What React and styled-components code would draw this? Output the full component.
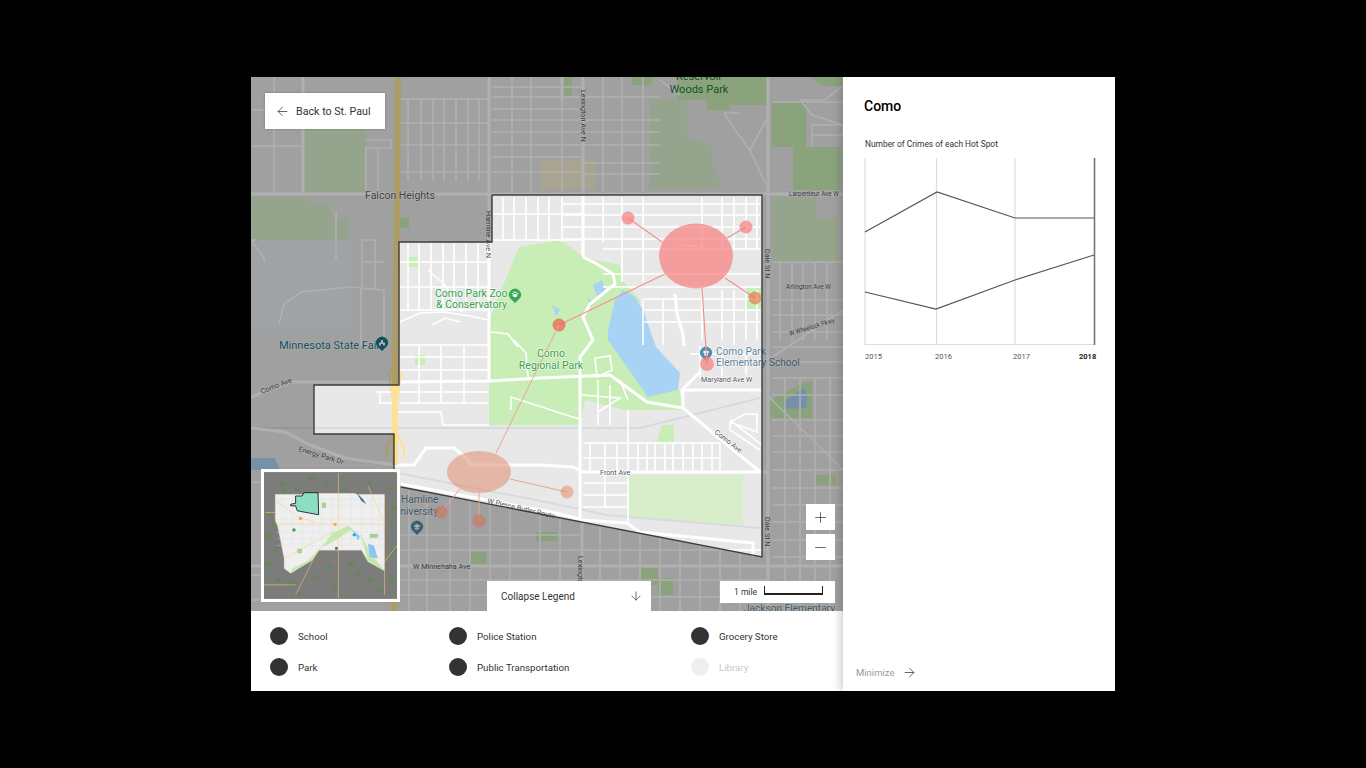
import styled, { createGlobalStyle } from "styled-components";
import { ArrowLeft, ArrowDown, ArrowRight, Plus, Minus } from "lucide-react";

const GlobalStyle = createGlobalStyle`
	html, body {
		margin: 0;
		height: 100%;
		background: #000000;
		font-family: Roboto, "Liberation Sans", sans-serif;
	}
`;

// map coordinates are page pixels, so the viewBox starts at the stage corner
const hLines = (x1, x2, ys) => ys.map((y) => `M${x1} ${y}H${x2}`).join("");
const vLines = (y1, y2, xs) => xs.map((x) => `M${x} ${y1}V${y2}`).join("");
const edgeY = (x) => 487 + (x - 401) * 0.194;
const southVerticals = (xs) =>
	xs.map((x) => `M${x} ${edgeY(x) + 1}V611`).join("");

const thinRoads = [
	// north west of the district
	vLines(100, 180, [408, 421, 433, 444, 456, 468, 479]),
	hLines(399, 489, [99, 123, 145, 172]),
	hLines(492, 582, [87, 97, 109, 120, 132, 145, 157, 172]),
	vLines(77, 192, [512, 531, 562, 603]),
	vLines(77, 192, [274]),
	hLines(251, 302, [110, 146]),
	vLines(77, 192, [622, 643]),
	hLines(582, 660, [97, 120, 132, 145, 163, 174]),
	"M366 140H391L391 148H366V192M378 150V192",
	"M251 240H256M251 240L264 258V262",
	"M279 324L284 304L301 292L351 287L384 290",
	"M362 240H375V290M362 240V290M362 262H384M336 212V260",
	"M340 345H384M361 287V345M384 290V345",
	"M660 80L680 95M724 113L735 130L750 150L766 185M750 150L766 120M724 113L740 113",
	"M800 100L825 100L843 85M800 100L812 115L843 125M812 125H843V135H812ZM812 135V147",
	// north east and east
	hLines(772, 843, [102, 262, 300, 315, 332, 347, 362, 378, 395, 420, 436, 452, 470, 488, 505, 522, 540, 557]),
	vLines(262, 340, [780, 792, 803, 815, 827]),
	vLines(378, 611, [785, 800, 815, 830]),
	"M768 396L843 470",
	"M768 360L843 310",
	// inside, north part
	vLines(197, 250, [622, 643, 702, 722, 734, 746, 757]),
	vLines(197, 242, [562, 603]),
	hLines(562, 760, [204, 215, 227, 239]),
	hLines(603, 760, [249, 274, 287]),
	vLines(245, 282, [622, 643]),
	vLines(197, 240, [503, 514, 526, 538, 549]),
	hLines(492, 582, [214, 240]),
	vLines(290, 340, [702, 722, 734, 746, 757]),
	hLines(643, 760, [299, 310, 322]),
	vLines(300, 345, [643, 663]),
	"M682 246H702M680 240V246",
	// inside, west part
	vLines(243, 310, [408, 419, 431, 443, 454, 466, 478]),
	hLines(400, 489, [262, 287, 310, 345, 357, 370, 392, 403]),
	vLines(345, 403, [419, 441, 464]),
	"M400 322L420 313L445 312L470 316L489 320M432 325L445 318L460 322",
	"M428 270L445 285L462 312",
	"M491 332L508 334L518 347M514 340L526 353L528 377",
	"M376 392H398M380 392V403H398",
	"M398 412H441L443 425H489",
	"M511 410V397L551 410L582 420",
	"M582 395L620 398L598 412M595 358L610 356L612 370L597 377Z",
	"M598 380V425M620 380L628 400M610 385V425",
	"M690 354H762M700 346V378M722 346V378M734 310V345M746 346V375",
	// inside, south part
	vLines(443, 472, [590, 605, 617, 638, 647, 655, 665, 673, 683, 693, 702, 712, 720]),
	hLines(583, 720, [443, 458]),
	"M628 410V522",
	hLines(583, 628, [483, 495, 507]),
	"M605 472V507",
	"M730 422L745 414H757V432L730 422M730 422V430L760 450M730 420L762 445",
	// south of the district
	southVerticals([409, 427, 450, 470, 490, 510, 540, 560, 600, 620, 640, 660, 680, 700, 720, 740]),
	hLines(401, 582, [535, 550, 580, 595]),
	hLines(582, 768, [550, 580, 597]),
	"M251 482H262M251 575H262M251 600H262",
];

const mainRoads = [
	"M251 194H843",
	"M489 77V381",
	"M303 77V192",
	"M583 77V257",
	"M562 77V100",
	"M768 77V611",
	"M251 397L291 382H395L489 381L540 378L610 375L647 402L683 408L760 472",
	"M251 428L285 432L310 445L345 458L395 465H414L426 448H454L468 460L471 465H540L573 467L583 472H768",
	"M583 257L597 264L613 274L615 284L590 304L583 317L593 340L580 357V520",
	"M683 408L682 390L700 372M675 294L677 314L683 334L684 346",
	"M683 408V390H762",
	"M401 484L551 512L583 520L627 523L640 532L753 543V557",
	"M582 520V611",
	"M251 566H843",
];

const PARKS = [
	"M519 247L560 240L585 258L620 265L622 280L640 300L640 325L660 390L680 390L683 410L625 410L585 400L580 425H489V320Z",
	"M662 425H674V442H657Z",
	"M746 288H762V309H746Z",
	"M677 77H767V105H730V110H707V100H677Z",
	"M772 102H806V147H841V190H793V147H772Z",
	"M770 400L805 382H812V418H770Z",
	"M640 568H658V578H673V595H658V585H640Z",
	"M536 532H557V541H536Z",
	"M471 552H486V564H471Z",
	"M815 475H836V485H815Z",
	"M400 218H409V228H400Z",
	"M408 257H418V267H408Z",
	"M415 355H425V365H415Z",
	"M810 77H843V86H822Z",
	"M564 77H572V96H564Z",
	"M632 77H652V85H632Z",
];

// these read much paler than the parks in the reference
const PALE_PARKS = [
	"M650 99L687 100V137L713 147L712 164L722 189H650Z",
	"M772 197H816V218H838V262H772Z",
	"M305 129H366V192H305Z",
	"M251 197H309V204H331V218H349V240H251Z",
	"M629 475H743V525L629 519Z",
];

const OUTSIDE =
	"M251 77H843V611H251ZM492 195H762V557L401 487L394 470V434H314V385H399V242H492Z";

const Pin = ({ x, y, color, children }) => (
	<g transform={`translate(${x} ${y})`}>
		<path d="M0 8L-5 3A6 6 0 1 1 5 3Z" fill={color} />
		<g fill="#ffffff">{children}</g>
	</g>
);

const Paw = () => (
	<>
		<ellipse cy="0.5" rx="2.2" ry="1.7" />
		<circle cx="-2.6" cy="-1.4" r="0.8" />
		<circle cx="-0.9" cy="-2.7" r="0.8" />
		<circle cx="0.9" cy="-2.7" r="0.8" />
		<circle cx="2.6" cy="-1.4" r="0.8" />
	</>
);

const SchoolCap = () => <path d="M-3.5 -1L0 -3L3.5 -1L0 1ZM-2 0.400L0 1.500L2 0.400V2L0 3L-2 2Z" />;

const FairTent = () => <path d="M-3 2.500V-0.500H-1V-3H1V-0.500H3V2.500H1V1H-1V2.500Z" />;

const MapDrawing = () => (
	<MapSvg viewBox="251 77 592 534">
		<rect x="251" y="77" width="592" height="534" fill="#e8e8e8" />
		<rect x="251" y="230" width="100" height="100" fill="#e6edef" />
		<path d="M540 160H595V189H540Z" fill="#f5ecd2" />
		<path d="M251 458H275L280 470H251Z" fill="#a9d3f5" />
		<path d={PARKS.join("")} fill="#c9edb6" />
		<path d={PALE_PARKS.join("")} fill="#d8eecb" />
		<path
			d="M608 330L615 300L623 290L635 297L643 310L656 347L680 373L678 390L648 397L620 357L608 340Z"
			fill="#a9d3f5"
		/>
		<path d="M783 403L803 388L808 395L806 408L785 409Z" fill="#a9d3f5" />
		<path d="M593 285L602 280L606 292L597 296ZM588 298L594 303L590 308ZM552 305L560 310L556 316Z" fill="#a9d3f5" />
		<path d="M251 428H640L760 398" stroke="#d8dade" strokeWidth="2" fill="none" />
		<path d="M398 473L551 503L607 515L760 528" stroke="#d8dade" strokeWidth="2" fill="none" />
		<path d={thinRoads.join("")} stroke="#ffffff" strokeWidth="1.6" fill="none" />
		<path d={mainRoads.join("")} stroke="#ffffff" strokeWidth="3" fill="none" />
		<path
			d="M398 77L397 200L396 300L395 360L395 465M394 600V611"
			stroke="#fde293"
			strokeWidth="6"
			fill="none"
		/>
		<path
			d="M395 360L389 375L393 400M395 360L401 375L397 400M395 430L386 448L388 458M395 430L404 448L404 458"
			stroke="#fde293"
			strokeWidth="2"
			fill="none"
		/>
		<MapLabels>
			<DarkLabel x="400" y="199" textAnchor="middle">Falcon Heights</DarkLabel>
			<GreenLabel x="699" y="80" textAnchor="middle">Reservoir</GreenLabel>
			<GreenLabel x="699" y="93" textAnchor="middle">Woods Park</GreenLabel>
			<RoadLabel transform="translate(581 90) rotate(90)">Lexington Ave N</RoadLabel>
			<RoadLabel transform="translate(486 211) rotate(90)">Hamline Ave N</RoadLabel>
			<RoadLabel x="789" y="196" textLength="50" lengthAdjust="spacingAndGlyphs">Larpenteur Ave W</RoadLabel>
			<RoadLabel transform="translate(765 249) rotate(90)">Dale St N</RoadLabel>
			<RoadLabel transform="translate(765 517) rotate(90)">Dale St N</RoadLabel>
			<RoadLabel x="786" y="289" textLength="45" lengthAdjust="spacingAndGlyphs">Arlington Ave W</RoadLabel>
			<RoadLabel transform="translate(790 336) rotate(-17)" textLength="47" lengthAdjust="spacingAndGlyphs">W Wheelock Pkwy</RoadLabel>
			<ParkLabel x="435" y="297">Como Park Zoo</ParkLabel>
			<ParkLabel x="436" y="308">&amp; Conservatory</ParkLabel>
			<Pin x={515} y={295} color="#34a853"><Paw /></Pin>
			<TealLabel x="279" y="349">Minnesota State Fair</TealLabel>
			<Pin x={382} y={343} color="#12788c"><FairTent /></Pin>
			<ParkLabel x="551" y="357" textAnchor="middle">Como</ParkLabel>
			<ParkLabel x="551" y="369" textAnchor="middle">Regional Park</ParkLabel>
			<SchoolLabel x="716" y="355">Como Park</SchoolLabel>
			<SchoolLabel x="716" y="366">Elementary School</SchoolLabel>
			<Pin x={706} y={353} color="#4f8fa8"><SchoolCap /></Pin>
			<RoadLabel x="701" y="382">Maryland Ave W</RoadLabel>
			<RoadLabel transform="translate(714 433) rotate(38)">Como Ave</RoadLabel>
			<RoadLabel transform="translate(262 394) rotate(-22)">Como Ave</RoadLabel>
			<RoadLabel transform="translate(298 451) rotate(17)">Energy Park Dr</RoadLabel>
			<RoadLabel transform="translate(487 503) rotate(13)">W Pierce Butler Route</RoadLabel>
			<SchoolLabel x="401" y="503">Hamline</SchoolLabel>
			<SchoolLabel x="394" y="515">University</SchoolLabel>
			<Pin x={417} y={527} color="#4f8fa8"><SchoolCap /></Pin>
			<RoadLabel x="413" y="569">W Minnehaha Ave</RoadLabel>
			<RoadLabel x="600" y="475">Front Ave</RoadLabel>
			<RoadLabel transform="translate(578 556) rotate(90)">Lexington</RoadLabel>
			<SchoolLabel x="744" y="612">Jackson Elementary</SchoolLabel>
		</MapLabels>
		<path d={OUTSIDE} fillRule="evenodd" fill="rgba(0, 0, 0, 0.31)" />
		<path
			d="M492 195H762V557L401 487M394 470V434H314V385H399V242H492V195"
			fill="none"
			stroke="#3c3c3c"
			strokeWidth="1.4"
		/>
		<path
			d="M628 218L662 242M746 227L727 238M755 298L725 278M707 364L702 288M559 325L665 274"
			stroke="#f58f8f"
			strokeWidth="1.2"
			fill="none"
		/>
		<g fill="#f67f7f" fillOpacity="0.72">
			<ellipse cx="696" cy="256" rx="37" ry="32.5" />
			<circle cx="628" cy="218" r="6.5" />
			<circle cx="746" cy="227" r="6.5" />
			<circle cx="755" cy="298" r="6.5" fill="#e27d55" />
			<circle cx="559" cy="325" r="6.5" fill="#ee5e4e" />
			<circle cx="707" cy="364" r="7" />
		</g>
		<path
			d="M559 325L496 453M567 492L510 479M441 512L460 489M479 521V493"
			stroke="#e8a595"
			strokeWidth="1"
			fill="none"
		/>
		<g fill="#e08c70" fillOpacity="0.55">
			<ellipse cx="479" cy="472" rx="32" ry="21" />
			<circle cx="567" cy="492" r="6.5" />
			<circle cx="441" cy="512" r="6.5" fill="#d6705a" />
			<circle cx="479" cy="521" r="6.5" fill="#d6705a" />
		</g>
	</MapSvg>
);

const MINI_SPOTS = [
	[70, 55], [115, 75], [160, 40], [205, 60], [260, 75], [330, 55], [400, 70],
	[60, 120], [32, 150], [45, 180], [30, 215], [50, 260], [30, 300], [60, 350],
	[410, 130], [405, 190], [410, 260], [300, 330], [170, 340], [230, 370],
	[120, 390], [370, 380], [210, 310], [280, 300], [340, 350], [405, 345], [100, 360],
];

const MINI_GRID_X = [80, 110, 140, 170, 200, 230, 260, 290, 320, 350, 375];
const MINI_GRID_Y = [110, 130, 170, 190, 210, 230, 250];

const MiniMapDrawing = () => (
	<MiniSvg viewBox="24 28 404 384">
		<rect x="24" y="28" width="404" height="384" fill="#7c7d7a" />
		<g fill="#68855f">
			{MINI_SPOTS.map(([x, y]) => (
				<rect key={`${x}-${y}`} x={x} y={y} width="18" height="12" />
			))}
		</g>
		<path
			d="M58 95H190V92H300L305 95H390V327L340 300L320 265H190L170 295L105 335L85 320V290L65 190L58 175Z"
			fill="#efefef"
			stroke="#d9b8b0"
		/>
		<path
			d={vLines(95, 262, MINI_GRID_X) + hLines(62, 388, MINI_GRID_Y)}
			stroke="#dcdcdc"
			strokeWidth="1"
			fill="none"
		/>
		<path d="M105 335L170 295L230 215L280 190L320 225L340 300L390 327L345 270L320 220L285 205L240 235L190 262L160 295L110 320Z" fill="#c3e9af" />
		<path d="M340 245L358 250L370 290L345 285ZM295 205L315 222L310 235Z" fill="#8fc6ef" />
		<path d="M305 90L325 110L335 125L320 115Z" fill="#4a6f8f" />
		<g stroke="#f3d27a" strokeWidth="1.6" fill="none">
			<path d="M28 150H60M60 185H390M250 30V410M85 290L240 205M120 400L180 280M390 100V400M24 370H120" />
			<path d="M60 115L130 165L180 180M340 70L390 180M390 300L428 250" />
		</g>
		<g fill="#a5cf94">
			<rect x="125" y="260" width="14" height="14" />
			<rect x="200" y="120" width="12" height="16" />
			<rect x="345" y="215" width="25" height="12" />
		</g>
		<path
			d="M120 100H140L145 90H188L190 157L125 145L120 130L105 130V125L120 122Z"
			fill="#8adfc1"
			stroke="#111111"
			strokeWidth="2.5"
		/>
		<circle cx="135" cy="168" r="5" fill="#f2a93b" />
		<circle cx="115" cy="203" r="5" fill="#2f9e44" />
		<circle cx="88" cy="83" r="5" fill="#2f9e44" />
		<circle cx="298" cy="218" r="5" fill="#1da1f2" />
		<circle cx="240" cy="186" r="5" fill="#f2a93b" />
		<rect x="240" y="255" width="8" height="8" fill="#6b5a55" />
		<rect x="233" y="294" width="9" height="3" fill="#e05a4e" />
	</MiniSvg>
);

const years = ["2015", "2016", "2017", "2018"];

const LEGEND_ITEMS = [
	{ label: "School" },
	{ label: "Police Station" },
	{ label: "Grocery Store" },
	{ label: "Park" },
	{ label: "Public Transportation" },
	{ label: "Library", off: true },
];

const App = () => (
	<>
		<GlobalStyle />
		<Page>
			<Stage>
				<Left>
					<MapArea>
						<MapDrawing />
						<BackButton>
							<ArrowLeft size={15} strokeWidth={1.2} />
							Back to St. Paul
						</BackButton>
						<MiniMap>
							<MiniMapDrawing />
						</MiniMap>
						<ZoomControls>
							<ZoomButton><Plus size={17} strokeWidth={1.1} /></ZoomButton>
							<ZoomButton><Minus size={17} strokeWidth={1.1} /></ZoomButton>
						</ZoomControls>
						<CollapseTab>
							Collapse Legend
							<ArrowDown size={14} strokeWidth={1.2} />
						</CollapseTab>
						<ScaleBox>
							1 mile
							<ScaleBar />
						</ScaleBox>
					</MapArea>
					<Legend>
						{LEGEND_ITEMS.map((item) => (
							<LegendItem key={item.label} $off={item.off}>
								<LegendDot $off={item.off} />
								{item.label}
							</LegendItem>
						))}
					</Legend>
				</Left>
				<Sidebar>
					<Title>Como</Title>
					<ChartTitle>Number of Crimes of each Hot Spot</ChartTitle>
					<ChartSvg viewBox="0 0 232 187">
						<path
							d="M1 0V186.500H231M72.500 0V186M151 0V186"
							stroke="#dddddd"
							strokeWidth="1.200"
							fill="none"
						/>
						<path d="M230.500 0V187" stroke="#777777" strokeWidth="1.600" />
						<g stroke="#555555" strokeWidth="1.200" fill="none">
							<path d="M1 74L73 34L151 60L230 60" />
							<path d="M1 134L72 151L151 122L230 97" />
						</g>
					</ChartSvg>
					<Years>
						{years.map((year) => (
							<Year key={year} $current={year === "2018"}>{year}</Year>
						))}
					</Years>
					<Minimize>
						Minimize
						<ArrowRight size={15} strokeWidth={1.3} color="#444444" />
					</Minimize>
				</Sidebar>
			</Stage>
		</Page>
	</>
);

const Page = styled.div`
	display: flex;
	justify-content: center;
	padding-top: 77px;
	height: 691px;
	overflow: hidden;
`;

const Stage = styled.div`
	display: flex;
	width: 864px;
	height: 614px;
	background: #ffffff;
`;

const Left = styled.div`
	display: flex;
	flex-direction: column;
	width: 592px;
`;

const MapArea = styled.div`
	position: relative;
	height: 534px;
	overflow: hidden;
`;

const MapSvg = styled.svg`
	display: block;
	width: 592px;
	height: 534px;
`;

const MapLabels = styled.g`
	font-family: Roboto, "Liberation Sans", sans-serif;
`;

const RoadLabel = styled.text`
	font-size: 7.2px;
	fill: #4c5056;
	stroke: #ffffff;
	stroke-width: 1.2px;
	paint-order: stroke;
`;

const DarkLabel = styled.text`
	font-size: 10.5px;
	fill: #5f6368;
	stroke: #ffffff;
	stroke-width: 1.2px;
	paint-order: stroke;
`;

const ParkLabel = styled.text`
	font-size: 10.5px;
	fill: #2f9e44;
	stroke: #ffffff;
	stroke-width: 1px;
	paint-order: stroke;
`;

const GreenLabel = styled.text`
	font-size: 11px;
	fill: #1e7a30;
`;

const TealLabel = styled.text`
	font-size: 11px;
	fill: #12788c;
	stroke: #ffffff;
	stroke-width: 1px;
	paint-order: stroke;
`;

const SchoolLabel = styled.text`
	font-size: 10.1px;
	fill: #5b7f99;
	stroke: #ffffff;
	stroke-width: 1px;
	paint-order: stroke;
`;

const BackButton = styled.button`
	position: absolute;
	top: 16px;
	left: 14px;
	display: flex;
	align-items: center;
	gap: 6px;
	width: 120px;
	height: 36px;
	padding: 0 0 0 10px;
	border: 0;
	background: #ffffff;
	color: #333333;
	font: 400 10.7px Roboto, sans-serif;
	box-shadow: 0 0 2px rgba(0, 0, 0, 0.3);
`;

const MiniMap = styled.div`
	position: absolute;
	left: 10px;
	top: 392px;
	width: 133px;
	height: 127px;
	border: 3px solid #ffffff;
`;

const MiniSvg = styled.svg`
	display: block;
	width: 133px;
	height: 127px;
`;

const ZoomControls = styled.div`
	position: absolute;
	top: 427px;
	left: 555px;
	display: flex;
	flex-direction: column;
	gap: 4px;
`;

const ZoomButton = styled.button`
	display: flex;
	align-items: center;
	justify-content: center;
	width: 29px;
	height: 26px;
	padding: 0;
	border: 0;
	background: #ffffff;
	color: #444444;
`;

const CollapseTab = styled.button`
	position: absolute;
	left: 236px;
	bottom: 0;
	display: flex;
	align-items: center;
	justify-content: space-between;
	width: 164px;
	height: 30px;
	padding: 0 8px 0 14px;
	border: 0;
	background: #ffffff;
	color: #333333;
	font: 400 10px Roboto, sans-serif;
`;

const ScaleBox = styled.div`
	position: absolute;
	left: 469px;
	top: 504px;
	display: flex;
	align-items: center;
	gap: 7px;
	box-sizing: border-box;
	width: 115px;
	height: 22px;
	padding-left: 14px;
	background: #ffffff;
	color: #333333;
	font-size: 8.5px;
`;

const ScaleBar = styled.div`
	width: 57px;
	height: 7px;
	margin-top: -3px;
	border: solid #222222;
	border-width: 0 1px 2px;
`;

const Legend = styled.div`
	display: grid;
	grid-template-columns: 179px 242px 1fr;
	grid-auto-rows: 18px;
	row-gap: 13px;
	height: 80px;
	box-sizing: border-box;
	padding: 16px 0 0 19px;
`;

const LegendItem = styled.div`
	display: flex;
	align-items: center;
	gap: 10px;
	font-size: 9.7px;
	color: ${(props) => (props.$off ? "#c8c8c8" : "#333333")};
`;

const LegendDot = styled.span`
	width: 18px;
	height: 18px;
	border-radius: 50%;
	background: ${(props) => (props.$off ? "#eeeeee" : "#333333")};
`;

const Sidebar = styled.aside`
	position: relative;
	display: flex;
	flex-direction: column;
	box-sizing: border-box;
	width: 272px;
	padding: 21px 20px 11px 21px;
	background: #ffffff;
	box-shadow: -3px 0 8px rgba(0, 0, 0, 0.18);
`;

const Title = styled.h1`
	margin: 0;
	font-size: 14px;
	line-height: 16px;
	font-weight: 500;
	color: #000000;
`;

const ChartTitle = styled.p`
	margin: 24px 0 0 1px;
	font-size: 8.4px;
	line-height: 12px;
	color: #333333;
`;

const ChartSvg = styled.svg`
	display: block;
	width: 232px;
	height: 187px;
	margin-top: 8px;
`;

const Years = styled.div`
	display: grid;
	grid-template-columns: 70px 78px 66px auto;
	margin: 7px 0 0 1px;
`;

const Year = styled.span`
	font-size: 7.5px;
	line-height: 10px;
	font-weight: ${(props) => (props.$current ? 700 : 400)};
	color: ${(props) => (props.$current ? "#222222" : "#555555")};
`;

const Minimize = styled.div`
	display: flex;
	align-items: center;
	gap: 8px;
	margin: auto 0 0 -8px;
	font-size: 9.5px;
	color: #999999;
`;

export default App;
